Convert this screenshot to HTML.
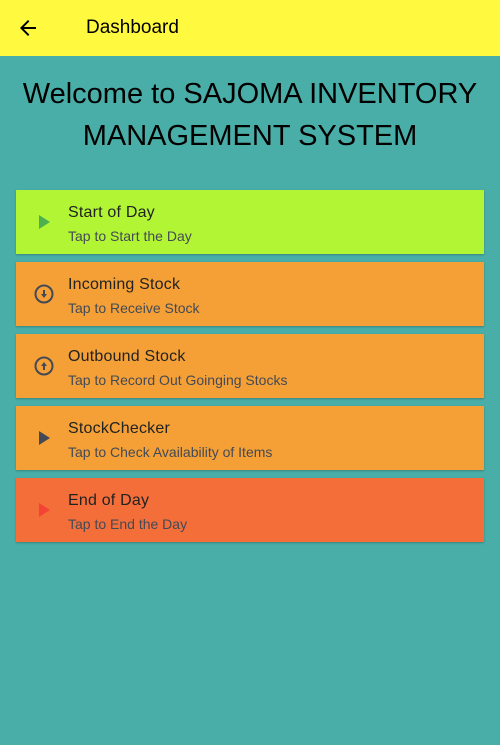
<!DOCTYPE html>
<html><head><style>
body{margin:0;width:500px;height:745px;background:#4aaea8;font-family:"Liberation Sans",Roboto,sans-serif;overflow:hidden}
.bar{height:56px;background:#fff940;position:relative}
.bar svg{position:absolute;left:16px;top:16px}
.bar span{position:absolute;left:86px;top:17px;font-size:19px;color:#000}
h1{margin:0;padding-top:17px;text-align:center;font-weight:normal;font-size:29px;line-height:42px;color:#000}
.list{position:absolute;top:190px;left:16px;width:468px}
.card{height:64px;margin-bottom:8px;position:relative;box-shadow:0 1px 2px rgba(0,0,0,.25)}
.card svg{position:absolute;left:16px;top:20px}
.t{position:absolute;left:52px;top:14px;font-size:16px;color:#222;letter-spacing:.2px}
.s{position:absolute;left:52px;top:38px;font-size:14px;color:#444a55}
</style></head><body>
<div class="bar"><svg width="24" height="24" viewBox="0 0 24 24"><path d="M20 11H7.8l5.6-5.6L12 4l-8 8 8 8 1.4-1.4L7.8 13H20z" fill="#000"/></svg><span>Dashboard</span></div>
<h1>Welcome to SAJOMA INVENTORY<br>MANAGEMENT SYSTEM</h1>
<div class="list">
<div class="card" style="background:#b2f535"><svg width="24" height="24" viewBox="0 0 24 24"><path d="M7 5v14l11-7z" fill="#4caf50"/></svg><div class="t">Start of Day</div><div class="s">Tap to Start the Day</div></div>
<div class="card" style="background:#f4a037"><svg width="24" height="24" viewBox="0 0 24 24"><circle cx="12" cy="12" r="8.5" fill="none" stroke="#444a55" stroke-width="2"/><path d="M11 8h2v4h2l-3 4-3-4h2z" fill="#444a55"/></svg><div class="t">Incoming Stock</div><div class="s">Tap to Receive Stock</div></div>
<div class="card" style="background:#f4a037"><svg width="24" height="24" viewBox="0 0 24 24"><circle cx="12" cy="12" r="8.5" fill="none" stroke="#444a55" stroke-width="2"/><path d="M11 16h2v-4h2l-3-4-3 4h2z" fill="#444a55"/></svg><div class="t">Outbound Stock</div><div class="s">Tap to Record Out Goinging Stocks</div></div>
<div class="card" style="background:#f4a037"><svg width="24" height="24" viewBox="0 0 24 24"><path d="M7 5v14l11-7z" fill="#444a55"/></svg><div class="t">StockChecker</div><div class="s">Tap to Check Availability of Items</div></div>
<div class="card" style="background:#f46e3a"><svg width="24" height="24" viewBox="0 0 24 24"><path d="M7 5v14l11-7z" fill="#f44336"/></svg><div class="t">End of Day</div><div class="s">Tap to End the Day</div></div>
</div>
</body></html>
